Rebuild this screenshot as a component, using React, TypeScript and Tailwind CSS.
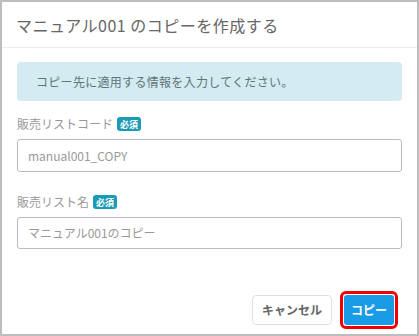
import React from 'react';

function Required() {
  return (
    <span className="ml-1 inline-flex h-[14px] items-center rounded-[3px] bg-[#1b9bb5] px-[3px] text-[9px] font-bold leading-none text-white">
      必須
    </span>
  );
}

export default function App() {
  return (
    <div
      className="flex h-[336px] w-[419px] flex-col border-2 border-[#bdbdbd] bg-white"
      style={{ fontFamily: '"Noto Sans CJK JP", "Noto Sans", sans-serif' }}
    >
      <div className="flex h-[46px] items-center border-b border-[#ececec] px-[14px]">
        <h1 className="text-[16px] tracking-[0.5px] text-[#666]">マニュアル001 のコピーを作成する</h1>
      </div>

      <div className="flex flex-1 flex-col px-[15px] pt-[14px]">
        <div className="flex h-[39px] items-center rounded-[4px] bg-[#d3ebf1] pl-[19px] text-[12px] tracking-[0.3px] text-[#5f7479]">
          コピー先に適用する情報を入力してください。
        </div>

        <label className="mt-[14px] flex items-center text-[12px] text-[#999]">
          販売リストコード
          <Required />
        </label>
        <div className="mt-[6px] flex h-[33px] items-center rounded-[3px] border border-[#b7bacd] px-[10px] text-[12px] text-[#999]">
          manual001_COPY
        </div>

        <label className="mt-[21px] flex items-center text-[12px] text-[#999]">
          販売リスト名
          <Required />
        </label>
        <div className="mt-[6px] flex h-[32px] items-center rounded-[3px] border border-[#b7bacd] px-[10px] text-[12px] text-[#999]">
          マニュアル001のコピー
        </div>

        <div className="mt-auto mb-[5px] flex items-center justify-end gap-[8px] pr-[4px]">
          <button className="h-[30px] w-[80px] rounded-[4px] border border-[#dde0ea] bg-white text-[12px] font-bold text-[#666]">
            キャンセル
          </button>
          <div className="rounded-[6px] border-[3px] border-[#f00000] p-[1px]">
            <button className="h-[30px] w-[50px] rounded-[3px] bg-[#1a9be6] text-[12px] font-bold text-white">
              コピー
            </button>
          </div>
        </div>
      </div>
    </div>
  );
}
